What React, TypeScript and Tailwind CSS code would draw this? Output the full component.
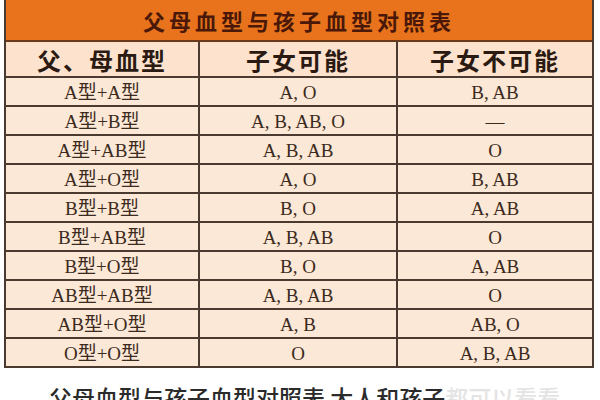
import React from 'react';

// ── Data ────────────────────────────────────────────────────
const ROWS: [string, string, string][] = [
  ['A型+A型', 'A, O', 'B, AB'],
  ['A型+B型', 'A, B, AB, O', '—'],
  ['A型+AB型', 'A, B, AB', 'O'],
  ['A型+O型', 'A, O', 'B, AB'],
  ['B型+B型', 'B, O', 'A, AB'],
  ['B型+AB型', 'A, B, AB', 'O'],
  ['B型+O型', 'B, O', 'A, AB'],
  ['AB型+AB型', 'A, B, AB', 'O'],
  ['AB型+O型', 'A, B', 'AB, O'],
  ['O型+O型', 'O', 'A, B, AB'],
];

const CJK = "font-['Noto_Sans_CJK_SC',sans-serif]";
const BODY = "font-['Liberation_Serif','Noto_Sans_CJK_SC',serif]";

function Cell({ children, last }: { children: React.ReactNode; last?: boolean }) {
  return (
    <div
      className={`flex h-[27px] items-center justify-center pt-[2px] text-[19px] leading-none text-[#3b2a20] ${BODY} ${
        last ? '' : 'border-r-2 border-[#4a3a30]'
      }`}
    >
      {children}
    </div>
  );
}

export default function App() {
  return (
    <div className="h-[400px] w-[600px] overflow-hidden bg-white">
      <div className="ml-[4px] w-[590px] border-x-2 border-b-2 border-[#4a3a30]">
        {/* Title */}
        <div
          className={`flex h-[42px] items-center justify-center border-b-2 border-[#6b3a1c] bg-[#e8731c] text-[22px] font-bold tracking-[4px] text-[#4a1808] ${CJK}`}
        >
          父母血型与孩子血型对照表
        </div>

        {/* Header */}
        <div
          className={`grid h-[36px] grid-cols-[194px_198px_1fr] border-b-2 border-[#4a3a30] bg-[#fde2cd] text-[24px] font-bold tracking-[2px] text-[#2a1a12] ${CJK}`}
        >
          <div className="flex items-center justify-center border-r-2 border-[#4a3a30]">父、母血型</div>
          <div className="flex items-center justify-center border-r-2 border-[#4a3a30]">子女可能</div>
          <div className="flex items-center justify-center">子女不可能</div>
        </div>

        {/* Body */}
        {ROWS.map(([parents, can, cannot], i) => (
          <div
            key={parents}
            className={`grid grid-cols-[194px_198px_1fr] bg-[#fce8d6] ${
              i < ROWS.length - 1 ? 'border-b-2 border-[#4a3a30]' : ''
            }`}
          >
            <Cell>{parents}</Cell>
            <Cell>{can}</Cell>
            <Cell last>{cannot}</Cell>
          </div>
        ))}
      </div>

      {/* Caption, cut off by the frame as in the source */}
      <div className={`mt-[15px] pl-[49px] text-[23px] font-medium leading-tight text-[#2b2b2b] ${CJK} whitespace-nowrap`}>
        父母血型与孩子血型对照表 大人和孩子<span className="text-[#e4e4e4]">都可以看看</span>
      </div>
    </div>
  );
}
